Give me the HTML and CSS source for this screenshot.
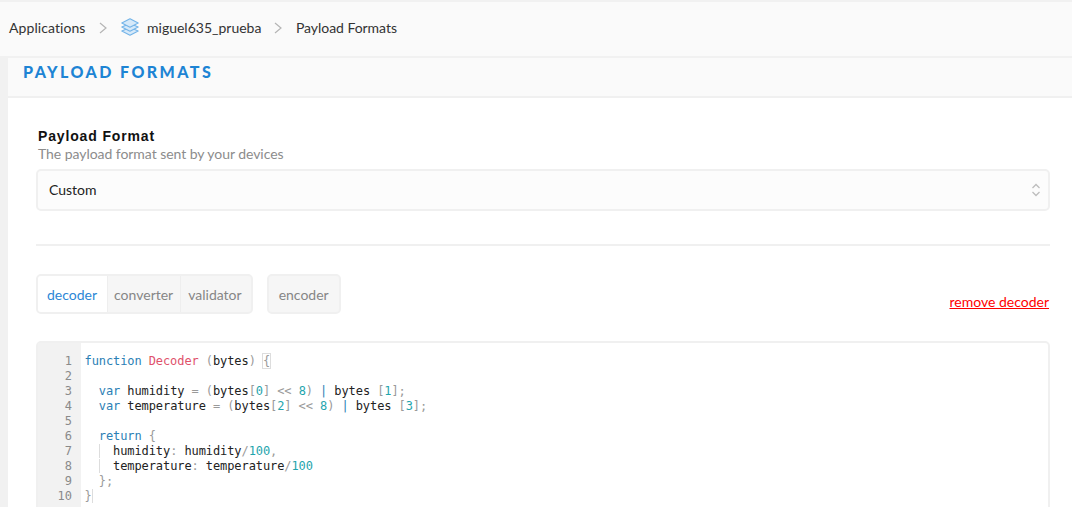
FILE: index.html
```html
<!DOCTYPE html>
<html lang="en">
<head>
<meta charset="utf-8">
<title>Payload Formats</title>
<link rel="stylesheet" href="styles.css">
</head>
<body>
<nav class="crumbs">
  <span class="first">Applications</span>
  <svg class="sep" width="8" height="12" viewBox="0 0 8 12"><path d="M1 1l6 5-6 5" fill="none" stroke="#b5b5b5" stroke-width="1.2"/></svg>
  <svg class="stack" width="18" height="18" viewBox="0 0 18 18" fill="#d6e9f9" stroke="#74b4e8" stroke-width="1.1" stroke-linejoin="round"><path d="M9 9.5L.8 13 9 17.3 17.2 13z"/><path d="M9 5.5L.8 9 9 13.3 17.2 9z"/><path d="M9 .7L.8 5 9 9.3 17.2 5z"/></svg>
  <span class="app">miguel635_prueba</span>
  <svg class="sep sep2" width="8" height="12" viewBox="0 0 8 12"><path d="M1 1l6 5-6 5" fill="none" stroke="#b5b5b5" stroke-width="1.2"/></svg>
  <span>Payload Formats</span>
</nav>
<main class="panel">
  <h1 class="title">PAYLOAD FORMATS</h1>
  <section class="content">
    <div class="label">Payload Format</div>
    <div class="hint">The payload format sent by your devices</div>
    <div class="select">
      <span>Custom</span>
      <svg width="10" height="14" viewBox="0 0 10 14"><path d="M1.5 5L5 1.5 8.5 5M1.5 9L5 12.5 8.5 9" fill="none" stroke="#bdbdbd" stroke-width="1.3"/></svg>
    </div>
    <hr class="rule">
    <div class="toolbar">
      <div class="tabs">
        <span class="tab active">decoder</span>
        <span class="tab conv">converter</span>
        <span class="tab valid">validator</span>
      </div>
      <div class="tabs solo"><span class="tab">encoder</span></div>
      <a class="remove" href="#">remove decoder</a>
    </div>
    <div class="editor">
      <div class="gutter">1<br>2<br>3<br>4<br>5<br>6<br>7<br>8<br>9<br>10</div>
<pre class="code"><span class="k">function</span> <span class="f">Decoder</span> <span class="p">(</span>bytes<span class="p">)</span> <span class="m">{</span>

  <span class="k">var</span> humidity <span class="p">=</span> <span class="p">(</span>bytes<span class="p">[</span><span class="n">0</span><span class="p">]</span> <span class="p">&lt;&lt;</span> <span class="n">8</span><span class="p">)</span> <span class="b">|</span> bytes <span class="p">[</span><span class="n">1</span><span class="p">];</span>
  <span class="k">var</span> temperature <span class="p">=</span> <span class="p">(</span>bytes<span class="p">[</span><span class="n">2</span><span class="p">]</span> <span class="p">&lt;&lt;</span> <span class="n">8</span><span class="p">)</span> <span class="b">|</span> bytes <span class="p">[</span><span class="n">3</span><span class="p">];</span>

  <span class="k">return</span> <span class="p">{</span>
  <span class="g">  </span>humidity<span class="p">:</span> humidity<span class="p">/</span><span class="n">100</span><span class="p">,</span>
  <span class="g">  </span>temperature<span class="p">:</span> temperature<span class="p">/</span><span class="n">100</span>
  <span class="p">};</span>
<span class="p m2">}</span></pre>
    </div>
  </section>
</main>
</body>
</html>
```
FILE: styles.css
```css
* { box-sizing: border-box; }
html, body { height: 100%; }
body {
  margin: 0;
  height: 507px;
  overflow: hidden;
  background: #f1f1f1;
  font-family: Lato, "Liberation Sans", sans-serif;
  font-size: 14px;
  color: #222;
}
.crumbs {
  height: 54px;
  margin-top: 2px;
  background: #fafafa;
  display: flex;
  align-items: center;
  padding: 0 0 4px 9px;
  color: #333;
}
.crumbs .first { letter-spacing: 0.08px; }
.crumbs .sep { margin: 1px 0 0 13px; }
.crumbs .stack { margin-left: 14px; }
.crumbs .app { margin-left: 8.5px; }
.crumbs .sep2 { margin-left: 13px; }
.crumbs .sep2 + span { margin-left: 13.5px; letter-spacing: -0.04px; }
.panel {
  margin: 2px 0 0 8px;
  background: #fff;
  height: 449px;
  overflow: hidden;
}
.title {
  margin: 0;
  height: 40px;
  padding: 4px 0 0 15px;
  background: #fafafa;
  border-bottom: 2px solid #f0f0f0;
  font-size: 16px;
  line-height: 20px;
  font-weight: 900;
  letter-spacing: 2.43px;
  color: #1d84d4;
}
.content { padding: 0 22px 0 28px; }
.label {
  margin: 30px 0 0 2px;
  font-family: "Liberation Sans", Arial, sans-serif;
  font-weight: 700;
  font-size: 14px;
  letter-spacing: 0.85px;
  line-height: 17px;
  color: #111;
}
.hint {
  margin: 0 0 0 2px;
  font-size: 14px;
  letter-spacing: -0.05px;
  line-height: 17px;
  color: #8c8c8c;
}
.select {
  margin-top: 7px;
  height: 42px;
  background: #fcfcfc;
  border: 2px solid #f0f0f0;
  border-radius: 5px;
  display: flex;
  align-items: center;
  justify-content: space-between;
  padding: 0 7px 1px 11px;
  color: #222;
}
.rule {
  margin: 33px 0 0;
  border: 0;
  height: 2px;
  background: #f0f0f0;
}
.toolbar {
  margin-top: 28px;
  display: flex;
  align-items: flex-start;
  gap: 14px;
  height: 67px;
}
.tabs {
  display: flex;
  height: 40px;
  border: 2px solid #f0f0f0;
  border-radius: 5px;
  overflow: hidden;
  background: #f6f6f6;
}
.tab {
  display: flex;
  align-items: center;
  color: #868686;
  border-left: 1px solid #eeeeee;
}
.tab:first-child { border-left: 0; }
.tab.active {
  background: #fff;
  color: #2c87d6;
  padding: 0 10px 0 9px;
}
.tab.conv { padding: 0 7px 0 6px; }
.tab.valid { padding: 0 9px 0 7px; }
.solo .tab { padding: 0 10px; }
.remove {
  margin: 19px 1px 0 auto;
  color: #f00;
  font-size: 14px;
  line-height: 18px;
}
.editor {
  display: flex;
  height: 200px;
  border: 2px solid #f0f0f0;
  border-radius: 5px;
  background: #fff;
  font-family: "DejaVu Sans Mono", monospace;
  font-size: 12px;
  line-height: 15px;
  color: #222;
}
.gutter {
  width: 43px;
  flex: none;
  padding: 11px 9px 0 0;
  background: #f2f2f2;
  text-align: right;
  color: #8a8a8a;
}
.code {
  margin: 0;
  padding: 11px 0 0 3.5px;
  font: inherit;
  line-height: 15px;
  letter-spacing: -0.09px;
}
.k { color: #2b80b5; }
.f { color: #e0516b; }
.p { color: #9a9a9a; }
.n { color: #1fa5ad; }
.b { color: #2b80b5; }
.g { box-shadow: inset 1px 0 0 #dddddd; }
.m { color: #9a9a9a; outline: 1px solid #ddd; }
.m2 { box-shadow: 1px 0 0 #dddddd; }
```
